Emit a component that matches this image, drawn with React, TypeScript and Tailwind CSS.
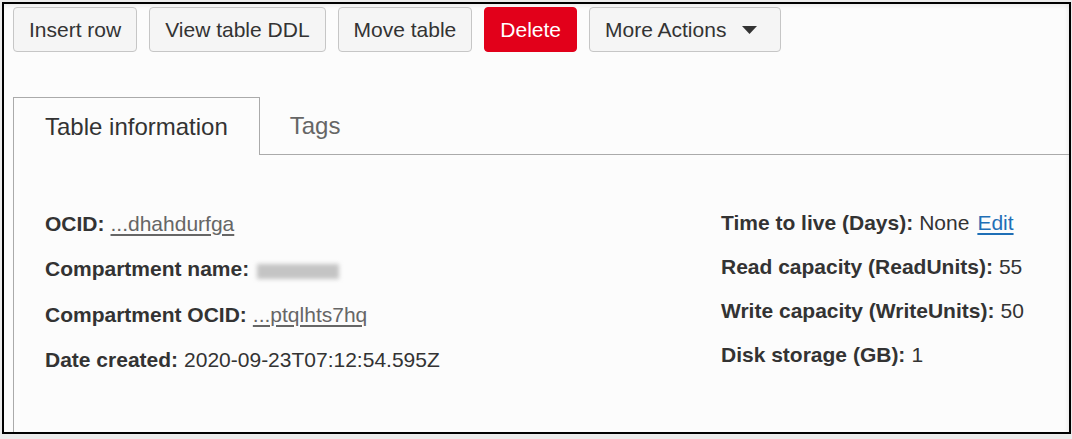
import React from "react";

function Btn({ children, className = "" }: { children: React.ReactNode; className?: string }) {
  return (
    <button
      className={
        "h-[45px] pl-[15px] rounded-[4px] border text-[21px] leading-none flex items-center " +
        className
      }
    >
      {children}
    </button>
  );
}

function Row({ label, children }: { label: string; children?: React.ReactNode }) {
  return (
    <div className="flex items-center whitespace-nowrap">
      <span className="font-bold text-[#333]">{label}</span>
      <span className="ml-[6px] text-[#333] flex items-center">{children}</span>
    </div>
  );
}

export default function App() {
  return (
    <div className="w-[1072px] h-[439px] bg-[#ebebeb] pt-[2px] pl-[2px] font-['Liberation_Sans',Arial,sans-serif]">
      <div className="w-[1069px] h-[432px] border-2 border-black bg-[#fcfcfc] overflow-hidden shadow-[inset_0_5px_5px_-3px_rgba(0,0,0,0.07),inset_-4px_0_4px_-3px_rgba(0,0,0,0.08)]">
        <div className="flex gap-[12px] pl-[9px] pt-[3px]">
          <Btn className="pr-[15px] bg-[#f5f5f5] border-[#c6c6c6] text-[#333]">Insert row</Btn>
          <Btn className="pr-[15px] bg-[#f5f5f5] border-[#c6c6c6] text-[#333]">View table DDL</Btn>
          <Btn className="pr-[15px] bg-[#f5f5f5] border-[#c6c6c6] text-[#333]">Move table</Btn>
          <Btn className="pr-[15px] bg-[#e2001a] border-[#e2001a] text-white">Delete</Btn>
          <Btn className="pr-[23px] bg-[#f5f5f5] border-[#c6c6c6] text-[#333]">
            More Actions
            <svg width="15" height="8" viewBox="0 0 15 8" className="ml-[16px]">
              <path d="M0 0 L15 0 L7.5 8 Z" fill="#333" />
            </svg>
          </Btn>
        </div>

        <div className="ml-[9px] mt-[45px]">
          <div className="flex items-end">
            <div className="h-[58px] border border-b-0 border-[#aaa] bg-[#fcfcfc] px-[31px] flex items-center text-[24px] text-[#333]">
              Table information
            </div>
            <div className="flex-1 h-[58px] border-b border-[#aaa] pl-[30px] flex items-center text-[24px] text-[#666]">
              Tags
            </div>
          </div>
          <div className="border-l border-[#aaa] h-[300px] pl-[31px] pt-[46px] flex text-[21px]">
            <div className="w-[676px] flex flex-col">
              <div className="h-[45px] flex items-center">
                <Row label="OCID:">
                  <span className="underline text-[#666] underline-offset-[3px]">...dhahdurfga</span>
                </Row>
              </div>
              <div className="h-[46px] flex items-center">
                <Row label="Compartment name:">
                  <span className="inline-block w-[82px] h-[15px] bg-[#c4c4c4] blur-[2px] ml-[2px] translate-y-[2px]" />
                </Row>
              </div>
              <div className="h-[45px] flex items-center">
                <Row label="Compartment OCID:">
                  <span className="underline text-[#666] underline-offset-[3px]">...ptqlhts7hq</span>
                </Row>
              </div>
              <div className="h-[45px] flex items-center">
                <Row label="Date created:">2020-09-23T07:12:54.595Z</Row>
              </div>
            </div>
            <div className="flex flex-col">
              <div className="h-[44px] flex items-center">
                <Row label="Time to live (Days):">
                  None
                  <span className="ml-[8px] underline text-[#1f6fb6] underline-offset-[3px]">Edit</span>
                </Row>
              </div>
              <div className="h-[44px] flex items-center">
                <Row label="Read capacity (ReadUnits):">55</Row>
              </div>
              <div className="h-[44px] flex items-center">
                <Row label="Write capacity (WriteUnits):">50</Row>
              </div>
              <div className="h-[44px] flex items-center">
                <Row label="Disk storage (GB):">1</Row>
              </div>
            </div>
          </div>
        </div>
      </div>
    </div>
  );
}
